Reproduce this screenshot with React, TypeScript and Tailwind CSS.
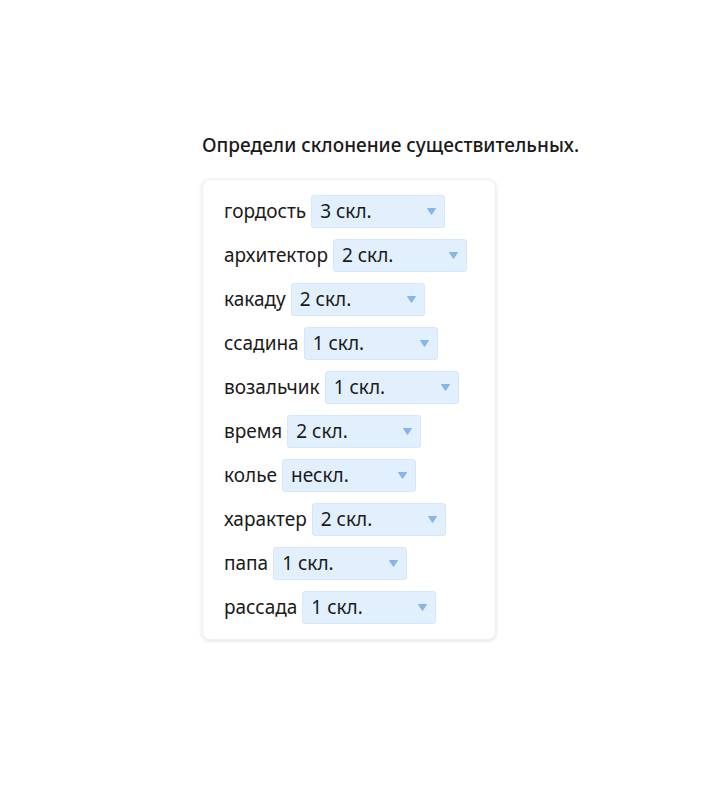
import React from 'react';

const rows: { word: string; value: string }[] = [
    { word: 'гордость', value: '3 скл.' },
    { word: 'архитектор', value: '2 скл.' },
    { word: 'какаду', value: '2 скл.' },
    { word: 'ссадина', value: '1 скл.' },
    { word: 'возальчик', value: '1 скл.' },
    { word: 'время', value: '2 скл.' },
    { word: 'колье', value: 'нескл.' },
    { word: 'характер', value: '2 скл.' },
    { word: 'папа', value: '1 скл.' },
    { word: 'рассада', value: '1 скл.' },
];

const Select: React.FC<{ value: string }> = ({ value }) => (
    <div className="flex items-center justify-between w-[134px] h-[33px] rounded-[3px] bg-[#e2effc] border border-[#d5e7f9] pl-[8px] pr-[8px]">
        <span>{value}</span>
        <svg width="9" height="7" viewBox="0 0 9 7">
            <path d="M0.5 0.5 L8.5 0.5 L4.5 6.5 Z" fill="#86b6e8" stroke="#86b6e8" strokeLinejoin="round" strokeWidth="1" />
        </svg>
    </div>
);

export default function App() {
    return (
        <div className="min-h-[788px] bg-white font-['Noto_Sans',sans-serif] text-[#1a1a1a]">
            <div className="pt-[130px] pl-[202px]">
                <h2 className="text-[19px] font-medium leading-[30px] mb-[19px]">Определи склонение существительных.</h2>
                <div className="inline-flex flex-col gap-[11px] w-[294px] rounded-[8px] bg-white shadow-[0_1px_4px_rgba(0,0,0,0.12)] border border-[#f0f0f0] pl-[21px] pt-[15px] pb-[15px]">
                    {rows.map(r => (
                        <div key={r.word} className="flex items-center gap-[5px] text-[19px] leading-[33px]">
                            <span>{r.word}</span>
                            <Select value={r.value} />
                        </div>
                    ))}
                </div>
            </div>
        </div>
    );
}
